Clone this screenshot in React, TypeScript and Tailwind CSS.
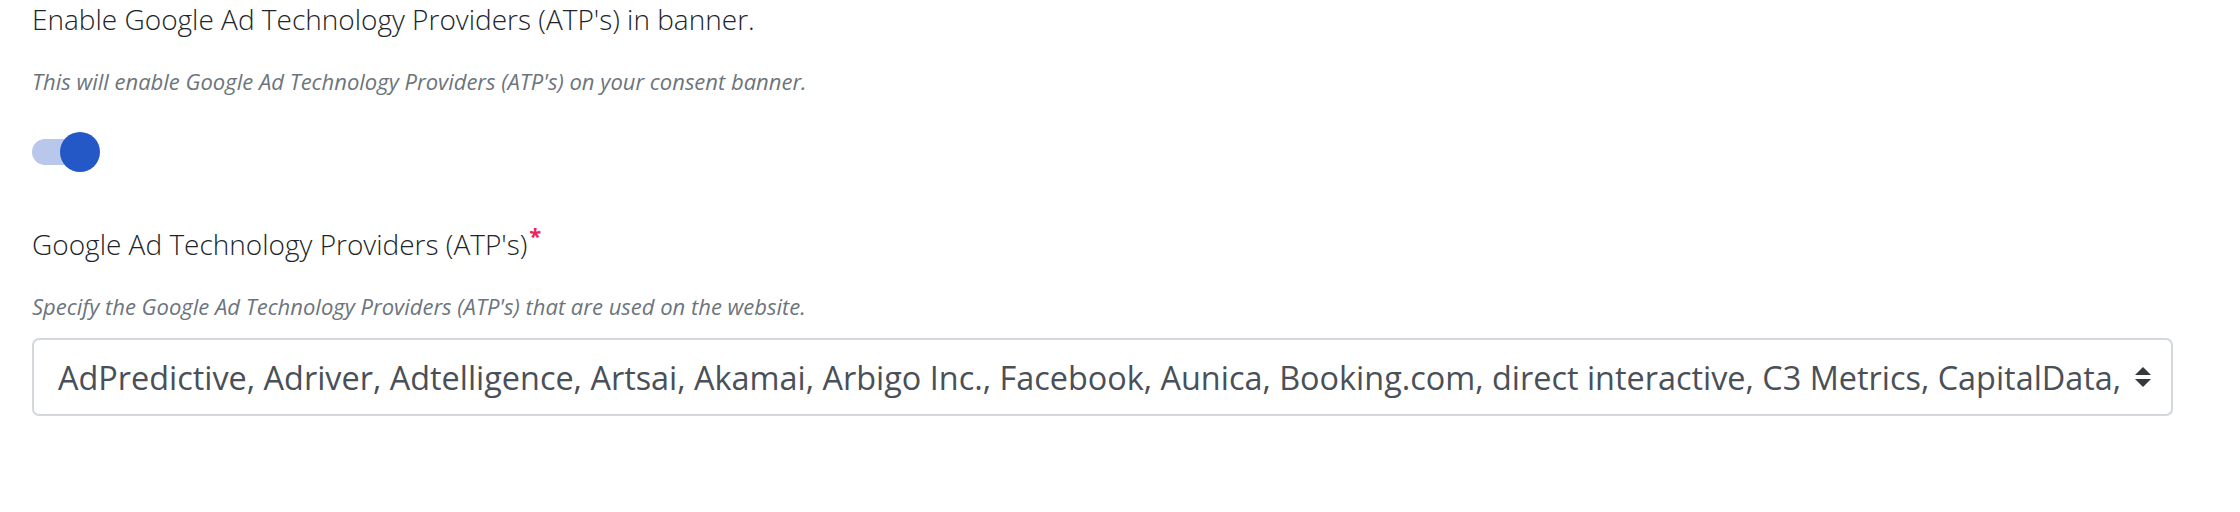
// Consent banner settings: Google ATP section

const providers =
  "AdPredictive, Adriver, Adtelligence, Artsai, Akamai, Arbigo Inc., Facebook, Aunica, Booking.com, direct interactive, C3 Metrics, CapitalData,";

export default function App() {
  return (
    <div className="min-h-screen bg-white pl-[32px] pr-[67px] font-['Open_Sans',sans-serif]">
      {/* Enable toggle */}
      <div>
        <div className="text-[28px] font-light leading-[38px] text-[#212529]">
          Enable Google Ad Technology Providers (ATP's) in banner.
        </div>
        <p className="mt-[29px] text-[22px] italic leading-[28px] text-[#6c757d]">
          This will enable Google Ad Technology Providers (ATP's) on your consent banner.
        </p>
        <div className="mt-[37px] relative h-[40px] w-[70px]">
          <div className="absolute left-0 top-[7px] h-[26px] w-[62px] rounded-full bg-[#b9c7eb]" />
          <div className="absolute left-[28px] top-0 h-[40px] w-[40px] rounded-full bg-[#2458c6]" />
        </div>
      </div>

      {/* ATP select */}
      <div className="mt-[53px]">
        <div className="text-[28px] font-light leading-[38px] text-[#212529]">
          Google Ad Technology Providers (ATP's)
          <sup className="ml-[2px] text-[22px] font-bold text-[#e8245a]">*</sup>
        </div>
        <p className="mt-[29px] text-[22px] italic leading-[28px] text-[#6c757d]">
          Specify the Google Ad Technology Providers (ATP's) that are used on the website.
        </p>
        <div className="mt-[18px] flex h-[78px] items-center rounded-[7px] border-2 border-[#d3d7dc] bg-white pl-[24px] pr-[22px]">
          <div className="flex-1 whitespace-nowrap text-[32.4px] leading-[40px] text-[#495057]">
            {providers}
          </div>
          <svg width="16" height="20" viewBox="0 0 16 20" className="ml-[14px] shrink-0">
            <path d="M8 0 L16 8 H0 Z" fill="#343a40" />
            <path d="M0 12 H16 L8 20 Z" fill="#343a40" />
          </svg>
        </div>
      </div>
    </div>
  );
}
